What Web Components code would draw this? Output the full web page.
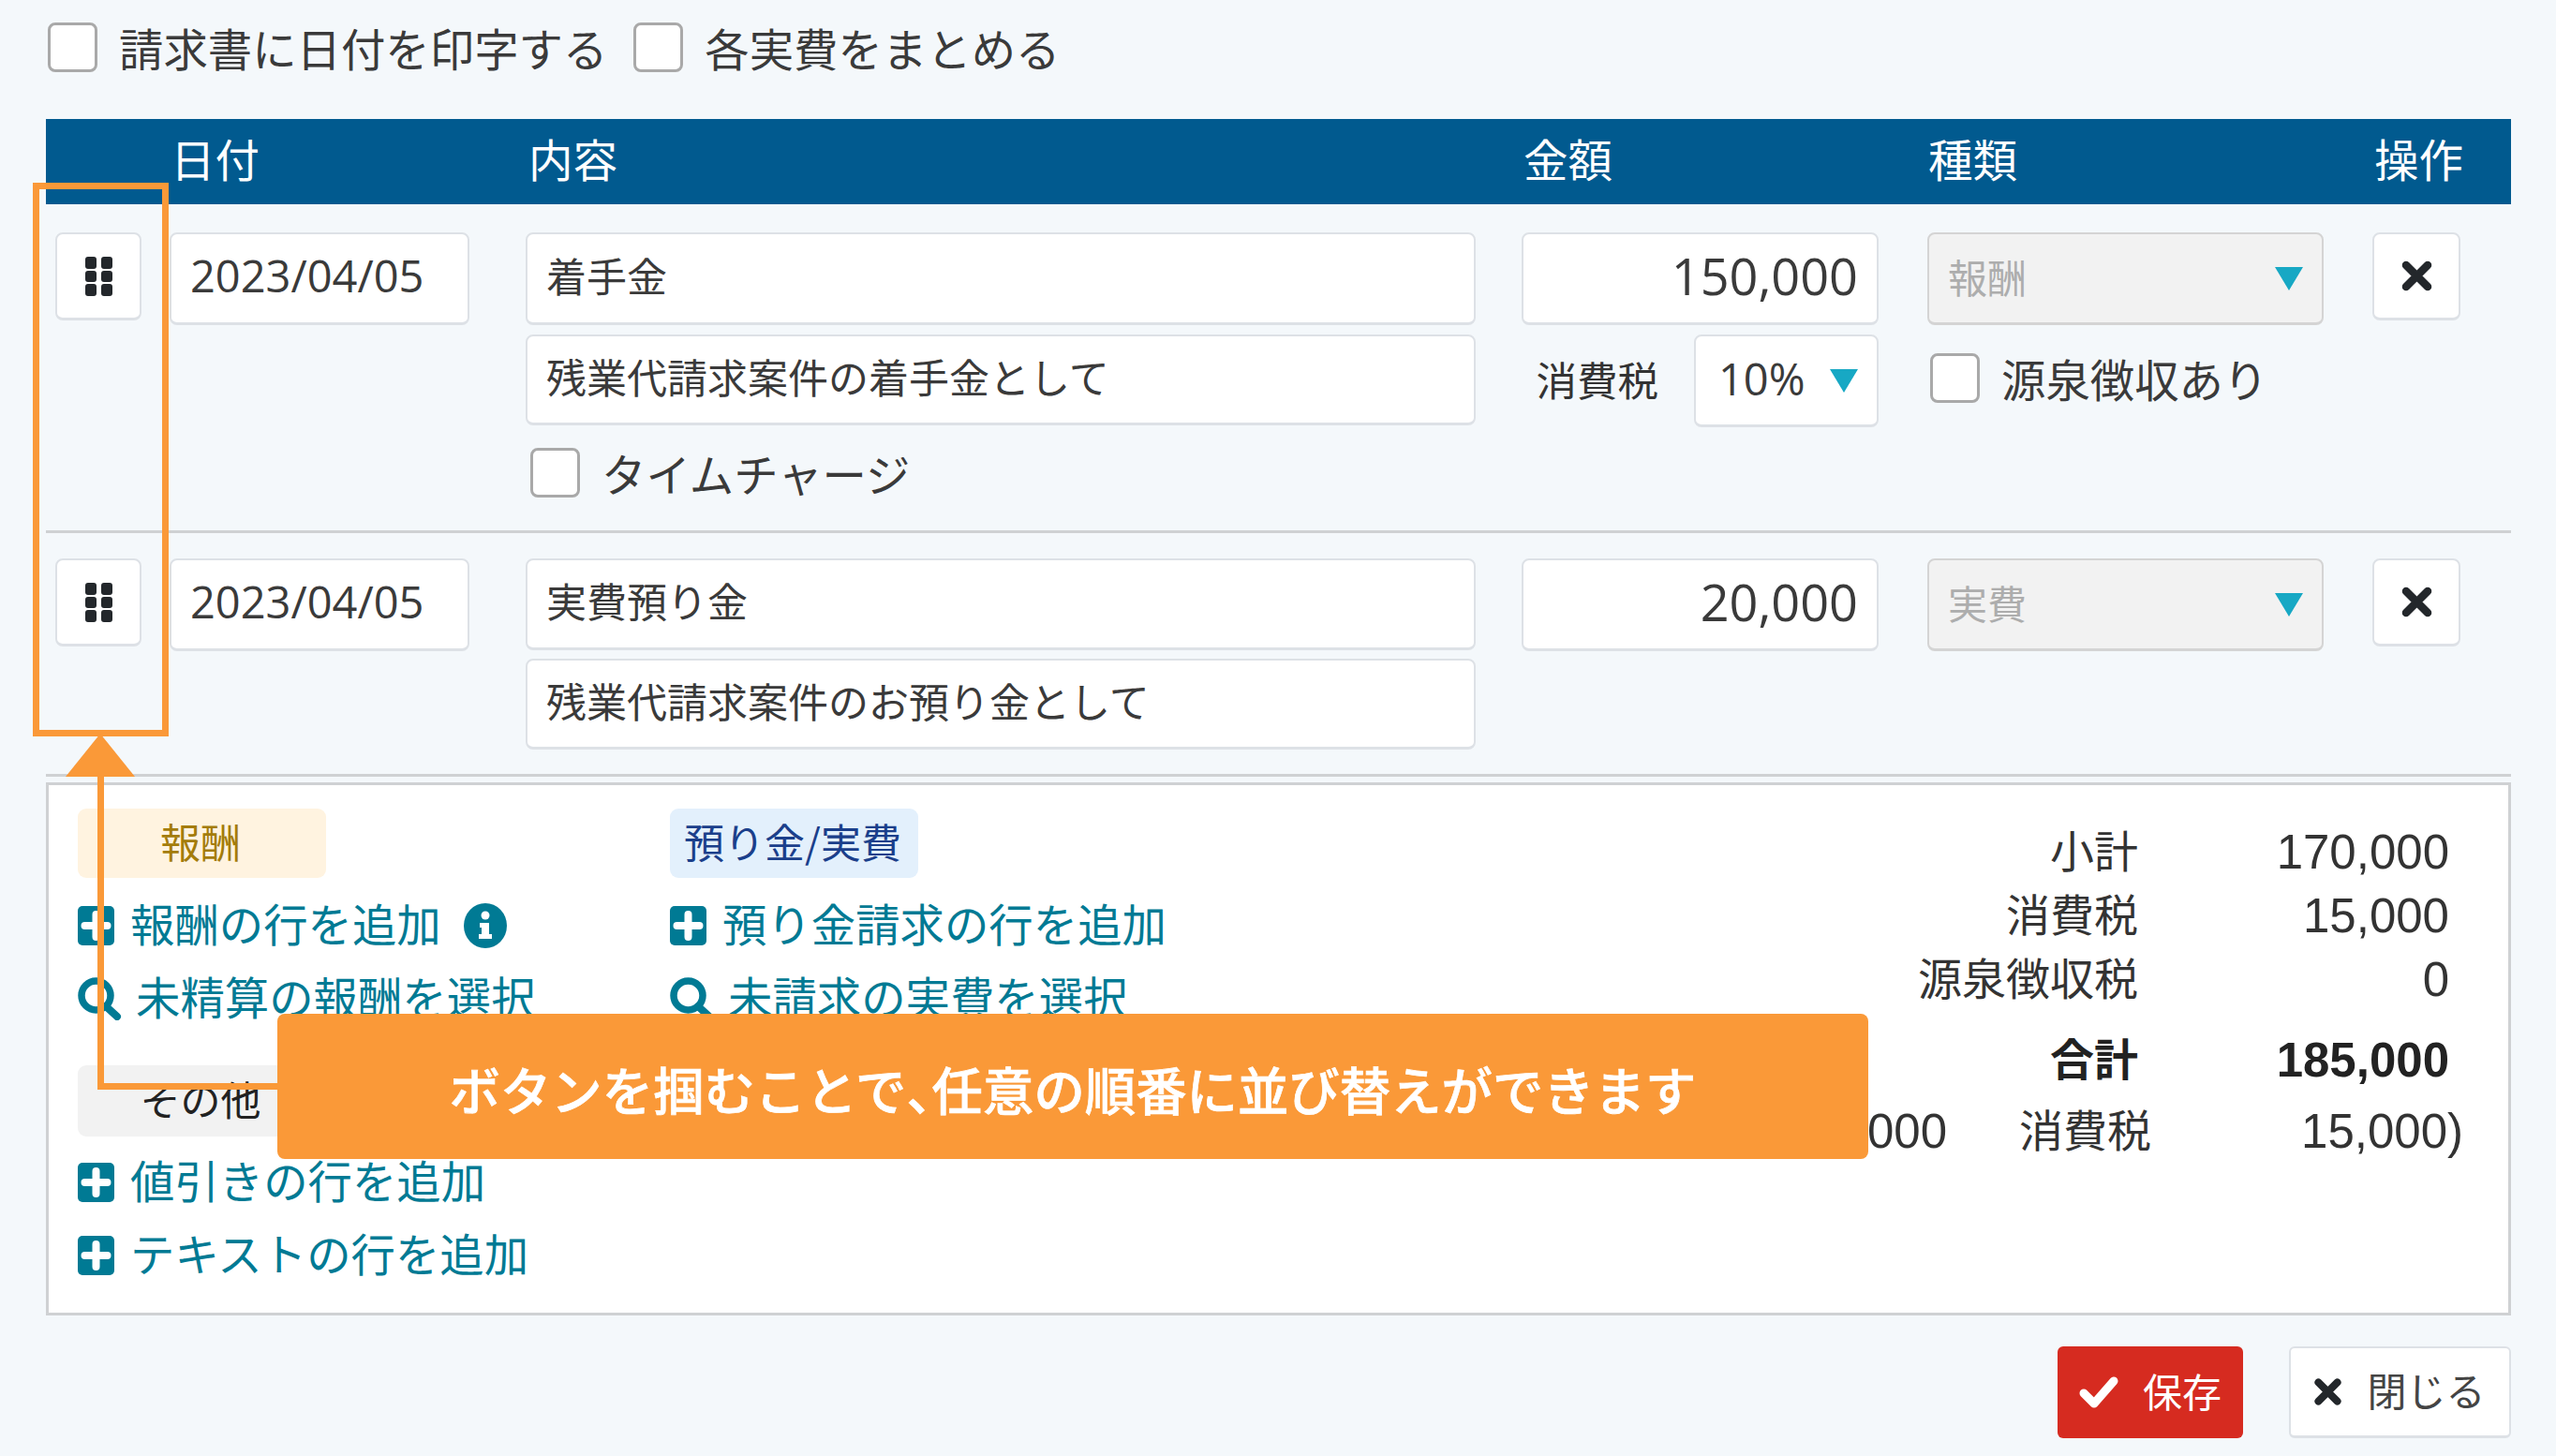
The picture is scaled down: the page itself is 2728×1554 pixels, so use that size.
<!DOCTYPE html>
<html lang="ja">
<head>
<meta charset="utf-8">
<title>請求書</title>
<style>
	html, body { margin: 0; padding: 0; }
	body {
		width: 2728px;
		height: 1554px;
		overflow: hidden;
		position: relative;
		background: #f4f8fb;
		color: #333;
		font-family: "Noto Sans CJK JP", "Noto Sans", sans-serif;
		font-size: 47px;
	}
</style>
</head>
<body>
<bill-form></bill-form>

<script>
const ICONS = {
	grip: `<svg width="29" height="42" viewBox="0 0 29 42"><g fill="#23272b"><rect width="12" height="13" rx="3"/><rect x="17" width="12" height="13" rx="3"/><rect y="15" width="12" height="12" rx="3"/><rect x="17" y="15" width="12" height="12" rx="3"/><rect y="29" width="12" height="13" rx="3"/><rect x="17" y="29" width="12" height="13" rx="3"/></g></svg>`,
	times: `<svg width="33" height="33" viewBox="0 0 33 33"><path d="M5 5 L28 28 M28 5 L5 28" stroke="#23272b" stroke-width="8.5" stroke-linecap="round"/></svg>`,
	timesSmall: `<svg width="29" height="29" viewBox="0 0 33 33"><path d="M5 5 L28 28 M28 5 L5 28" stroke="#23272b" stroke-width="9" stroke-linecap="round"/></svg>`,
	check: `<svg width="42" height="36" viewBox="0 0 42 36"><path d="M5 19 L16 30 L37 6" fill="none" stroke="#fff" stroke-width="9" stroke-linecap="round" stroke-linejoin="round"/></svg>`,
	plus: `<svg width="39" height="42" viewBox="0 0 39 42"><rect width="39" height="42" rx="5" fill="#007a94"/><path d="M19.5 9 V33 M7.5 21 H31.5" stroke="#fff" stroke-width="8" stroke-linecap="round"/></svg>`,
	search: `<svg width="47" height="46" viewBox="0 0 47 46"><circle cx="19.5" cy="19.5" r="15.5" fill="none" stroke="#007a94" stroke-width="7.5"/><path d="M30 31 L42 42" stroke="#007a94" stroke-width="8" stroke-linecap="round"/></svg>`,
	info: `<svg width="46" height="48" viewBox="0 0 46 48"><ellipse cx="23" cy="24" rx="23" ry="24" fill="#007a94"/><circle cx="23" cy="13" r="4.5" fill="#fff"/><path d="M17 21 H27 V33 H30 V38 H16 V33 H19 V26 H17 Z" fill="#fff"/></svg>`,
};

class BillCheck extends HTMLElement {
	constructor() {
		super();
		this.attachShadow({ mode: "open" });
		this.shadowRoot.innerHTML = `
			<style>
				:host { display: flex; align-items: center; gap: 23px; }
				#box {
					width: 53px;
					height: 53px;
					box-sizing: border-box;
					flex: none;
					background: #fff;
					border: 3px solid #a9a9a9;
					border-radius: 8px;
				}
				span { white-space: nowrap; line-height: 53px; font-size: 47.4px; color: #3a3a3a; }
			</style>
			<div id="box"></div>
			<span><slot></slot></span>
		`;
	}
}

class BillField extends HTMLElement {
	constructor() {
		super();
		this.attachShadow({ mode: "open" });
		this.shadowRoot.innerHTML = `
			<style>
				:host {
					display: flex;
					align-items: center;
					box-sizing: border-box;
					height: var(--h, 99px);
					padding: 0 20px 9px;
					background: #fff;
					border: 2px solid #dde1e6;
					border-bottom-width: 3px;
					border-radius: 8px;
					font-size: 43px;
					color: #3a3a3a;
					white-space: nowrap;
				}
				:host([date]) { font-family: "Open Sans", sans-serif; font-size: 47px; padding-bottom: 7px; }
				:host([amount]) { justify-content: flex-end; font-family: "Open Sans", sans-serif; font-size: 54px; padding: 0 20px 7px; }
			</style>
			<slot></slot>
		`;
	}
}

class BillSelect extends HTMLElement {
	constructor() {
		super();
		this.attachShadow({ mode: "open" });
		this.shadowRoot.innerHTML = `
			<style>
				:host {
					display: flex;
					align-items: center;
					justify-content: space-between;
					box-sizing: border-box;
					height: 99px;
					padding: 0 20px;
					background: #fff;
					border: 2px solid #dde1e6;
					border-bottom-width: 3px;
					border-radius: 8px;
					font-family: "Open Sans", "Noto Sans CJK JP", sans-serif;
					font-size: 47px;
					color: #3a3a3a;
				}
				:host([disabled]) {
					background: #f2f2f2;
					border-color: #d4d4d4;
					color: #adadad;
					font-size: 42px;
					font-family: "Noto Sans CJK JP", sans-serif;
				}
				span { margin-bottom: 5px; }
				svg { flex: none; }
			</style>
			<span><slot></slot></span>
			<svg width="30" height="25" viewBox="0 0 30 25"><path d="M0 0 H30 L15 25 Z" fill="#17a8c4"/></svg>
		`;
	}
}

class IconButton extends HTMLElement {
	constructor() {
		super();
		this.attachShadow({ mode: "open" });
		this.shadowRoot.innerHTML = `
			<style>
				:host {
					display: flex;
					align-items: center;
					justify-content: center;
					box-sizing: border-box;
					width: var(--w, 94px);
					height: 94px;
					background: #fff;
					border: 2px solid #dde1e6;
					border-bottom-width: 3px;
					border-radius: 8px;
				}
			</style>
			${ICONS[this.getAttribute("icon")]}
		`;
	}
}

class BillRow extends HTMLElement {
	constructor() {
		super();
		this.attachShadow({ mode: "open" });
		this.shadowRoot.innerHTML = `
			<style>
				:host {
					display: grid;
					grid-template-columns: 122px 380px 1063px 433px 475px 1fr;
					box-sizing: border-box;
					padding: var(--pt, 27px) 0 var(--pb, 26px) 10px;
					border-bottom: 3px solid #cfd1d3;
					align-items: start;
				}
			</style>
			<slot></slot>
		`;
	}
}

class BillHeader extends HTMLElement {
	constructor() {
		super();
		this.attachShadow({ mode: "open" });
		this.shadowRoot.innerHTML = `
			<style>
				:host {
					display: grid;
					grid-template-columns: 123px 382px 1062px 432px 476px 1fr;
					align-items: center;
					box-sizing: border-box;
					height: 91px;
					margin-top: 50px;
					padding: 0 0 9px 10px;
					background: #015a8f;
					color: #fff;
					font-size: 47.5px;
				}
			</style>
			<slot></slot>
		`;
	}
}

class BillTag extends HTMLElement {
	constructor() {
		super();
		this.attachShadow({ mode: "open" });
		this.shadowRoot.innerHTML = `
			<style>
				:host {
					display: flex;
					align-items: center;
					justify-content: center;
					box-sizing: border-box;
					width: 265px;
					height: 74px;
					padding: 0 3px 6px 0;
					border-radius: 9px;
					font-size: 43px;
					background: #f2f2f2;
					color: #222;
					white-space: nowrap;
				}
				:host([kind="fee"]) { background: #fff3e0; color: #a47c0a; }
				:host([kind="deposit"]) { background: #e3f0fc; color: #1b3f8b; }
			</style>
			<slot></slot>
		`;
	}
}

class BillLink extends HTMLElement {
	constructor() {
		super();
		this.attachShadow({ mode: "open" });
		const icon = this.getAttribute("icon");
		this.shadowRoot.innerHTML = `
			<style>
				:host {
					display: flex;
					align-items: center;
					height: 78px;
					gap: ${icon === "search" ? 15 : 17}px;
					color: #007a94;
					font-size: 47.4px;
					white-space: nowrap;
				}
				#text { margin-bottom: 7px; }
				#info { display: flex; margin-left: 7px; }
				svg { flex: none; display: block; }
			</style>
			${ICONS[icon]}
			<span id="text"><slot></slot></span>
			${this.hasAttribute("info") ? `<span id="info">${ICONS.info}</span>` : ""}
		`;
	}
}

class TotalRow extends HTMLElement {
	constructor() {
		super();
		this.attachShadow({ mode: "open" });
		this.shadowRoot.innerHTML = `
			<style>
				:host {
					display: grid;
					grid-template-columns: 382px 332px;
					justify-items: end;
					align-items: center;
					height: 68px;
					padding-right: 63px;
					font-size: 47px;
					color: #333;
				}
				:host([strong]) { font-weight: 700; color: #222; }
				::slotted([slot="label"]) { margin-bottom: 7px; }
				::slotted([slot="value"]) { font-family: "Liberation Sans", sans-serif; font-size: 51px; }
			</style>
			<slot name="label"></slot>
			<slot name="value"></slot>
		`;
	}
}

class TaxNote extends HTMLElement {
	constructor() {
		super();
		this.attachShadow({ mode: "open" });
		this.shadowRoot.innerHTML = `
			<style>
				:host {
					display: grid;
					grid-template-columns: 178px 218px 333px;
					justify-items: end;
					align-items: center;
					height: 68px;
					margin-top: 8px;
					padding-right: 48px;
					font-size: 47px;
					color: #333;
				}
				::slotted(.label) { margin-bottom: 7px; }
				::slotted(.num) { font-family: "Liberation Sans", sans-serif; font-size: 51px; }
			</style>
			<slot></slot>
		`;
	}
}

class BillButton extends HTMLElement {
	constructor() {
		super();
		this.attachShadow({ mode: "open" });
		const save = this.hasAttribute("primary");
		this.shadowRoot.innerHTML = `
			<style>
				:host {
					display: flex;
					align-items: center;
					justify-content: center;
					gap: ${save ? 26 : 27}px;
					box-sizing: border-box;
					height: 98px;
					width: ${save ? 198 : 237}px;
					border-radius: 6px;
					font-size: 42px;
					white-space: nowrap;
					background: #fff;
					border: 2px solid #dde1e6;
					border-bottom-width: 3px;
					color: #444;
				}
				:host([primary]) { background: #d62b20; border: 0; color: #fff; }
				span { margin-bottom: 6px; }
			</style>
			${save ? ICONS.check : ICONS.timesSmall}
			<span><slot></slot></span>
		`;
	}
}

// 操作説明のオーバーレイ (枠・矢印・吹き出し)
class BillCallout extends HTMLElement {
	constructor() {
		super();
		this.attachShadow({ mode: "open" });
		this.shadowRoot.innerHTML = `
			<style>
				:host { position: absolute; inset: 0; pointer-events: none; }
				svg { position: absolute; left: 0; top: 0; }
				#box {
					position: absolute;
					left: 296px;
					top: 1082px;
					width: 1698px;
					height: 155px;
					display: flex;
					align-items: center;
					justify-content: center;
					box-sizing: border-box;
					padding-top: 3px;
					background: #fa9938;
					border-radius: 8px;
					color: #fff;
					font-size: 54.4px;
					font-weight: 500;
					-webkit-text-stroke: 0.7px #fff;
					white-space: nowrap;
				}
				::slotted(.comma) { font-feature-settings: "halt"; }
			</style>
			<svg width="2728" height="1554" viewBox="0 0 2728 1554">
				<rect x="38.5" y="198.5" width="138" height="584" fill="none" stroke="#fa9938" stroke-width="7"/>
				<path d="M107 783 L144 829 H70 Z" fill="#fa9938"/>
				<path d="M107.5 825 V1159.5 H300" fill="none" stroke="#fa9938" stroke-width="7"/>
			</svg>
			<div id="box"><slot></slot></div>
		`;
	}
}

class BillForm extends HTMLElement {
	constructor() {
		super();
		this.attachShadow({ mode: "open" });
		this.shadowRoot.innerHTML = `
			<style>
				:host { display: block; box-sizing: border-box; height: 1554px; padding: 24px 48px 0 49px; }
				#options { display: flex; padding-left: 2px; gap: 28px; }
				.stack { display: flex; flex-direction: column; gap: 10px; }
				.date { width: 320px; }
				.second { --h: 97px; }
				.time { padding: 14px 0 0 5px; }
				.tax { display: flex; justify-content: flex-end; align-items: center; }
				.tax span { margin: 0 38px 5px 0; font-size: 43.5px; }
				.tax bill-select { width: 197px; padding-left: 24px; padding-right: 20px; }
				.amount { width: 381px; }
				.kind { width: 423px; }
				.holding { display: flex; height: 99px; align-items: center; padding: 0 0 6px 3px; box-sizing: border-box; }
				#panel {
					display: flex;
					box-sizing: border-box;
					height: 569px;
					margin-top: 6px;
					padding: 25px 0 0 31px;
					background: #fff;
					border: 3px solid #cfd1d3;
				}
				#fee { width: 632px; }
				#fee bill-tag:nth-of-type(2) { margin-top: 32px; height: 76px; }
				.links { display: block; margin-top: 12px; }
				.links.after { margin-top: 10px; }
				#totals { margin-left: auto; width: 777px; padding-top: 8px; }
				#totals .sum { margin-top: 18px; }
				#actions { display: flex; justify-content: flex-end; gap: 49px; margin-top: 33px; }
			</style>

			<div id="options">
				<bill-check>請求書に日付を印字する</bill-check>
				<bill-check>各実費をまとめる</bill-check>
			</div>

			<bill-header>
				<span></span><span>日付</span><span>内容</span><span>金額</span><span>種類</span><span>操作</span>
			</bill-header>

			<bill-row style="--pt: 30px; --pb: 35px;">
				<icon-button icon="grip" style="--w: 92px;"></icon-button>
				<bill-field date class="date">2023/04/05</bill-field>
				<div class="stack" style="width: 1014px;">
					<bill-field>着手金</bill-field>
					<bill-field class="second">残業代請求案件の着手金として</bill-field>
					<div class="time"><bill-check>タイムチャージ</bill-check></div>
				</div>
				<div class="stack amount">
					<bill-field amount>150,000</bill-field>
					<div class="tax"><span>消費税</span><bill-select>10%</bill-select></div>
				</div>
				<div class="stack kind">
					<bill-select disabled>報酬</bill-select>
					<div class="holding"><bill-check>源泉徴収あり</bill-check></div>
				</div>
				<icon-button icon="times"></icon-button>
			</bill-row>

			<bill-row>
				<icon-button icon="grip" style="--w: 92px;"></icon-button>
				<bill-field date class="date">2023/04/05</bill-field>
				<div class="stack" style="width: 1014px; gap: 9px;">
					<bill-field style="--h: 98px;">実費預り金</bill-field>
					<bill-field class="second">残業代請求案件のお預り金として</bill-field>
				</div>
				<div class="amount"><bill-field amount>20,000</bill-field></div>
				<div class="kind"><bill-select disabled>実費</bill-select></div>
				<icon-button icon="times"></icon-button>
			</bill-row>

			<section id="panel">
				<div id="fee">
					<bill-tag kind="fee">報酬</bill-tag>
					<div class="links">
						<bill-link icon="plus" info>報酬の行を追加</bill-link>
						<bill-link icon="search">未精算の報酬を選択</bill-link>
					</div>
					<bill-tag>その他</bill-tag>
					<div class="links after">
						<bill-link icon="plus">値引きの行を追加</bill-link>
						<bill-link icon="plus">テキストの行を追加</bill-link>
					</div>
				</div>
				<div id="deposit">
					<bill-tag kind="deposit">預り金/実費</bill-tag>
					<div class="links">
						<bill-link icon="plus">預り金請求の行を追加</bill-link>
						<bill-link icon="search">未請求の実費を選択</bill-link>
					</div>
				</div>
				<div id="totals">
					<total-row><span slot="label">小計</span><span slot="value">170,000</span></total-row>
					<total-row><span slot="label">消費税</span><span slot="value">15,000</span></total-row>
					<total-row><span slot="label">源泉徴収税</span><span slot="value">0</span></total-row>
					<total-row strong class="sum"><span slot="label">合計</span><span slot="value">185,000</span></total-row>
					<tax-note><span class="num">000</span><span class="label">消費税</span><span class="num">15,000)</span></tax-note>
				</div>
			</section>

			<div id="actions">
				<bill-button primary>保存</bill-button>
				<bill-button>閉じる</bill-button>
			</div>

			<bill-callout>ボタンを掴むことで<span class="comma">、</span>任意の順番に並び替えができます</bill-callout>
		`;
	}
}

customElements.define("bill-check", BillCheck);
customElements.define("bill-field", BillField);
customElements.define("bill-select", BillSelect);
customElements.define("icon-button", IconButton);
customElements.define("bill-row", BillRow);
customElements.define("bill-header", BillHeader);
customElements.define("bill-tag", BillTag);
customElements.define("bill-link", BillLink);
customElements.define("total-row", TotalRow);
customElements.define("tax-note", TaxNote);
customElements.define("bill-button", BillButton);
customElements.define("bill-callout", BillCallout);
customElements.define("bill-form", BillForm);
</script>
</body>
</html>
